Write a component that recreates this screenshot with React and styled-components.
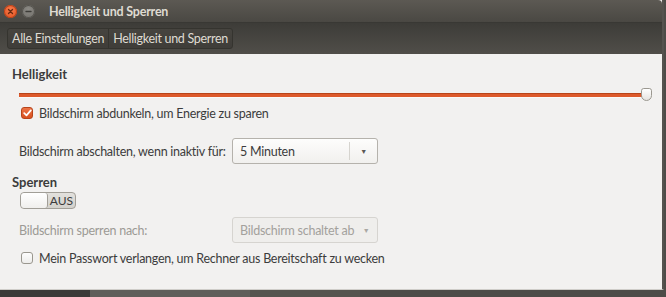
import React from "react";
import styled, { createGlobalStyle } from "styled-components";

const Global = createGlobalStyle`
  html, body { margin: 0; padding: 0; }
  body {
    width: 666px;
    height: 297px;
    overflow: hidden;
    background: #3a3936;
    font-family: Lato, "Open Sans", sans-serif;
  }
`;

const Desktop = styled.div`
  width: 666px;
  height: 297px;
  display: flex;
  flex-direction: column;
  background: linear-gradient(90deg, #3b3a38 0 90px, #5f5e5a 90px 250px, #55544f 250px 360px, #4d4c48 360px);
`;

const Window = styled.div`
  width: 664px;
  height: 290px;
  display: flex;
  flex-direction: column;
  background: #f2f1f0;
  border-right: 2px solid #55534f;
  border-bottom: 1px solid #cfcdc9;
  box-sizing: border-box;
`;

const TitleBar = styled.div`
  height: 22px;
  display: flex;
  align-items: center;
  gap: 5px;
  padding: 0 4px;
  background: linear-gradient(#5c5953, #4a4843);
  border-top-right-radius: 4px;
`;

const WinButton = styled.div`
  width: 13px;
  height: 13px;
  border-radius: 50%;
  display: flex;
  align-items: center;
  justify-content: center;
  background: ${(p) => (p.close ? "radial-gradient(circle at 50% 35%, #f7794a, #e2511f)" : "radial-gradient(circle at 50% 35%, #8c8a85, #6f6d68)")};
  box-shadow: inset 0 0 0 1px ${(p) => (p.close ? "#b8421a" : "#54524d")};
`;

const Title = styled.div`
  margin-left: 9px;
  color: #dfdbd2;
  font-weight: 700;
  font-size: 12.5px;
  letter-spacing: -0.2px;
`;

const Toolbar = styled.div`
  height: 32px;
  display: flex;
  align-items: center;
  padding: 0 7px;
  background: linear-gradient(#3d3c38, #504e49);
  border-top: 1px solid #393834;
  box-sizing: border-box;
`;

const Crumbs = styled.div`
  display: flex;
  height: 21px;
  border: 1px solid #35342f;
  border-radius: 3px;
  background: linear-gradient(#46443f, #3f3d39);
  box-sizing: border-box;
`;

const Crumb = styled.div`
  display: flex;
  align-items: center;
  padding: 0 4px;
  color: #dfdbd2;
  font-size: 12.5px;
  letter-spacing: -0.3px;
  border-left: ${(p) => (p.first ? "none" : "1px solid #35342f")};
`;

const Content = styled.div`
  flex: 1;
  display: flex;
  flex-direction: column;
  padding: 12px 0 0 12px;
  font-size: 12.5px;
  letter-spacing: -0.25px;
`;

const Heading = styled.div`
  color: #3c3c3c;
  font-weight: 700;
  font-size: 13px;
  letter-spacing: 0;
  height: 16px;
  line-height: 16px;
  margin-top: ${(p) => p.top || "0"};
`;

const SliderRow = styled.div`
  position: relative;
  height: 14px;
  margin: 6px 0 0 7px;
  width: 630px;
  display: flex;
  align-items: center;
`;

const Track = styled.div`
  flex: 1;
  height: 3px;
  background: #dd5a2c;
  border-top: 1px solid #b8441a;
  border-bottom: 1px solid #fbfaf9;
`;

const Thumb = styled.div`
  position: absolute;
  right: -3px;
  top: 0;
  width: 11px;
  height: 13px;
  border: 1px solid #9b9890;
  border-radius: 3px 3px 6px 6px;
  background: linear-gradient(#ffffff, #e6e4e0);
  box-sizing: border-box;
`;

const CheckRow = styled.label`
  display: flex;
  align-items: center;
  gap: 6px;
  margin: ${(p) => p.margin || "0"};
  padding-left: 9px;
  color: #3c3c3c;
  height: 14px;
  white-space: nowrap;
`;

const Box = styled.div`
  width: 12px;
  height: 12px;
  border-radius: 3px;
  box-sizing: border-box;
  display: flex;
  align-items: center;
  justify-content: center;
  border: 1px solid ${(p) => (p.checked ? "#b8441a" : "#9a978f")};
  background: ${(p) => (p.checked ? "linear-gradient(#ec7346, #d8501f)" : "linear-gradient(#fdfdfd, #eeedeb)")};
`;

const FormRow = styled.div`
  display: flex;
  align-items: center;
  margin: ${(p) => p.margin || "0"};
  padding-left: 7px;
`;

const Label = styled.div`
  width: 213px;
  white-space: nowrap;
  color: ${(p) => (p.disabled ? "#9c9a95" : "#3c3c3c")};
`;

const Combo = styled.div`
  width: 146px;
  height: 26px;
  box-sizing: border-box;
  display: flex;
  align-items: center;
  border: 1px solid ${(p) => (p.disabled ? "#d6d4d0" : "#b5b2ac")};
  border-radius: 3px;
  background: ${(p) => (p.disabled ? "#efeeec" : "linear-gradient(#fdfdfc, #f1f0ee)")};
  color: ${(p) => (p.disabled ? "#a3a19c" : "#3c3c3c")};
`;

const ComboText = styled.div`
  flex: 1;
  padding-left: 7px;
  white-space: nowrap;
  overflow: hidden;
`;

const ComboArrow = styled.div`
  width: ${(p) => (p.disabled ? "22px" : "27px")};
  height: 18px;
  display: flex;
  align-items: center;
  justify-content: center;
  border-left: ${(p) => (p.disabled ? "none" : "1px solid #d6d4cf")};
  color: ${(p) => (p.disabled ? "#aaa8a3" : "#5a5955")};
  font-size: 7px;
`;

const Switch = styled.div`
  display: flex;
  width: 56px;
  height: 17px;
  margin: 2px 0 0 8px;
  box-sizing: border-box;
  border: 1px solid #a19e97;
  border-radius: 4px;
  background: linear-gradient(#e3e1dd, #d3d1cc);
  overflow: hidden;
`;

const Knob = styled.div`
  width: 26px;
  background: linear-gradient(#ffffff, #f0efed);
  border-right: 1px solid #a19e97;
  border-radius: 3px;
`;

const SwitchText = styled.div`
  flex: 1;
  display: flex;
  align-items: center;
  justify-content: center;
  font-size: 12px;
  letter-spacing: 0;
  color: #3c3c3c;
`;

function Check({ checked }) {
  return (
    <Box checked={checked}>
      {checked && (
        <svg width="9" height="8" viewBox="0 0 9 8">
          <path d="M1.2 4.2 L3.5 6.4 L7.8 1.4" fill="none" stroke="#fff" strokeWidth="1.7" strokeLinecap="round" strokeLinejoin="round" />
        </svg>
      )}
    </Box>
  );
}

export default function App() {
  return (
    <>
      <Global />
      <Desktop>
        <Window>
          <TitleBar>
            <WinButton close>
              <svg width="7" height="7" viewBox="0 0 7 7">
                <path d="M1.5 1.5 L5.5 5.5 M5.5 1.5 L1.5 5.5" stroke="#6b2a10" strokeWidth="1.3" strokeLinecap="round" />
              </svg>
            </WinButton>
            <WinButton>
              <svg width="7" height="7" viewBox="0 0 7 7">
                <path d="M1 3.5 L6 3.5" stroke="#3d3c38" strokeWidth="1.4" strokeLinecap="round" />
              </svg>
            </WinButton>
            <Title>Helligkeit und Sperren</Title>
          </TitleBar>
          <Toolbar>
            <Crumbs>
              <Crumb first>Alle Einstellungen</Crumb>
              <Crumb>Helligkeit und Sperren</Crumb>
            </Crumbs>
          </Toolbar>
          <Content>
            <Heading>Helligkeit</Heading>
            <SliderRow>
              <Track />
              <Thumb />
            </SliderRow>
            <CheckRow margin="4px 0 0 0">
              <Check checked />
              Bildschirm abdunkeln, um Energie zu sparen
            </CheckRow>
            <FormRow margin="18px 0 0 0">
              <Label>Bildschirm abschalten, wenn inaktiv für:</Label>
              <Combo>
                <ComboText>5 Minuten</ComboText>
                <ComboArrow>▼</ComboArrow>
              </Combo>
            </FormRow>
            <Heading top="10px">Sperren</Heading>
            <Switch>
              <Knob />
              <SwitchText>AUS</SwitchText>
            </Switch>
            <FormRow margin="8px 0 0 0">
              <Label disabled>Bildschirm sperren nach:</Label>
              <Combo disabled>
                <ComboText>Bildschirm schaltet ab</ComboText>
                <ComboArrow disabled>▼</ComboArrow>
              </Combo>
            </FormRow>
            <CheckRow margin="8px 0 0 0">
              <Check />
              Mein Passwort verlangen, um Rechner aus Bereitschaft zu wecken
            </CheckRow>
          </Content>
        </Window>
      </Desktop>
    </>
  );
}
